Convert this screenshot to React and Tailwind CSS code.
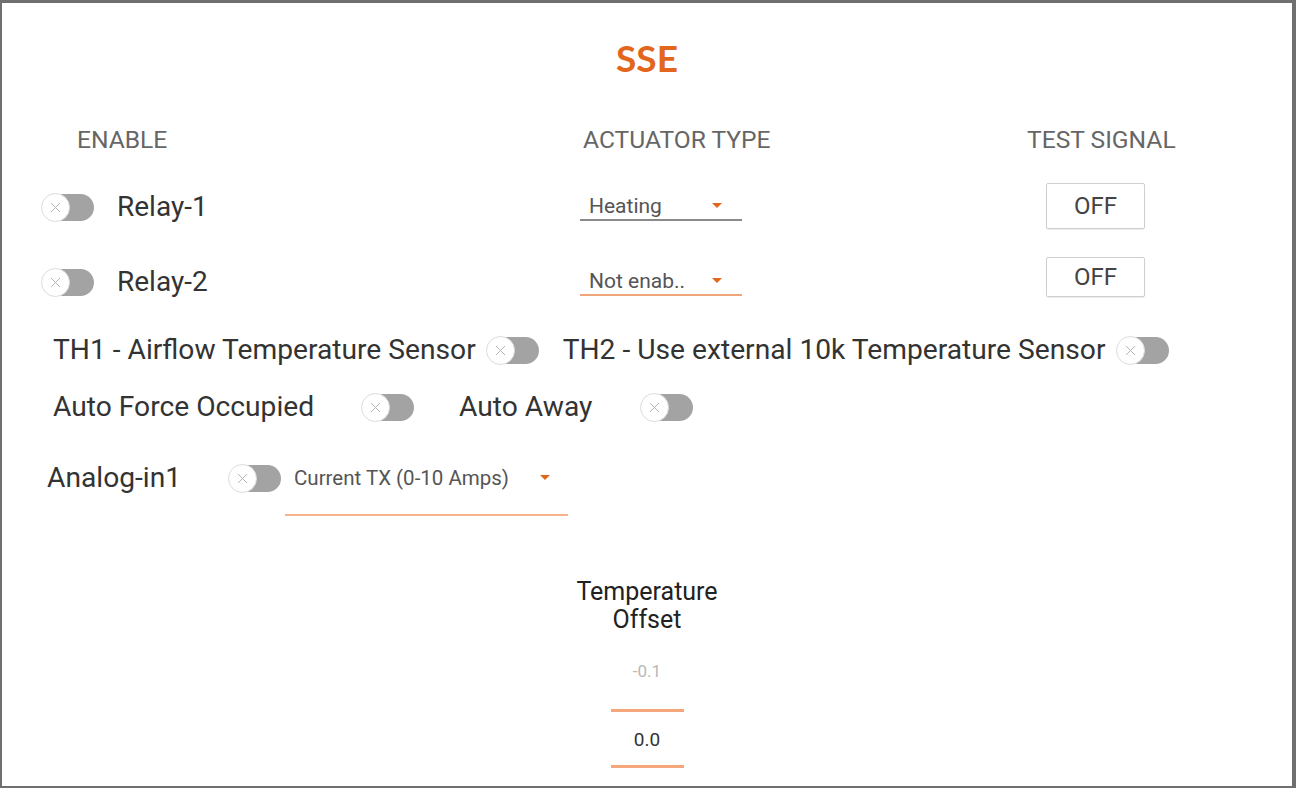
import React from "react";

const Toggle = () => (
  <div className="relative w-[53px] h-[29px] shrink-0">
    <div className="absolute left-[6px] right-0 top-[1px] h-[27px] rounded-full bg-[#a3a3a3]" />
    <div className="absolute left-0 top-0 w-[29px] h-[29px] rounded-full bg-white border border-[#dcdcdc] flex items-center justify-center">
      <svg width="11" height="11" viewBox="0 0 11 11">
        <path d="M1 1L10 10M10 1L1 10" stroke="#b5b5b5" strokeWidth="1" />
      </svg>
    </div>
  </div>
);

const Caret = () => (
  <svg width="10" height="6" viewBox="0 0 10 6">
    <path d="M0 0H10L5 5Z" fill="#e2661b" />
  </svg>
);

const Select = ({ label, line }) => (
  <div className={`w-[162px] h-[28px] pl-[9px] flex items-center justify-between border-b-2 ${line}`}>
    <span className="text-[21px] leading-[24px] text-[#555]">{label}</span>
    <span className="mr-[20px]">
      <Caret />
    </span>
  </div>
);

const OffButton = ({ h }) => (
  <div className={`w-[99px] ${h} border border-[#cfcfcf] rounded-[2px] flex items-center justify-center text-[24px] text-[#444] shadow-[0_1px_1px_rgba(0,0,0,0.08)]`}>
    OFF
  </div>
);

export default function App() {
  return (
    <div
      className="w-[1296px] h-[788px] bg-white border-t-[3px] border-l-2 border-r-4 border-b-2 border-[#6f6f6f] overflow-hidden"
      style={{ fontFamily: "Roboto, 'Noto Sans', sans-serif" }}
    >
      <h1 className="mt-[33px] text-center text-[37px] leading-[44px] font-bold text-[#e2661b]" style={{ fontFamily: "Lato, Roboto, sans-serif" }}>
        SSE
      </h1>

      {/* column headers */}
      <div className="mt-[45px] flex items-center h-[30px] text-[24.6px] text-[#666]">
        <div className="w-[581px] pl-[75px]">ENABLE</div>
        <div className="w-[444px]">ACTUATOR TYPE</div>
        <div>TEST SIGNAL</div>
      </div>

      {/* relay rows */}
      <div className="mt-[29px] flex items-center h-[46px]">
        <div className="w-[578px] pl-[39px] flex items-center gap-[23px]">
          <Toggle />
          <span className="text-[28px] text-[#333]">Relay-1</span>
        </div>
        <Select label="Heating" line="border-[#8a8a8a]" />
        <div className="ml-[304px] mb-[3px]">
          <OffButton h="h-[46px]" />
        </div>
      </div>
      <div className="mt-[32px] flex items-center h-[40px]">
        <div className="w-[578px] pl-[39px] flex items-center gap-[23px]">
          <Toggle />
          <span className="text-[28px] text-[#333]">Relay-2</span>
        </div>
        <Select label="Not enab.." line="border-[#f0a47a]" />
        <div className="ml-[304px] mb-[10px]">
          <OffButton h="h-[40px]" />
        </div>
      </div>

      {/* sensors */}
      <div className="mt-[28px] pl-[51px] flex items-center h-[40px] text-[28.2px] text-[#333]">
        <span>TH1 - Airflow Temperature Sensor</span>
        <span className="ml-[10px]"><Toggle /></span>
        <span className="ml-[24px]">TH2 - Use external 10k Temperature Sensor</span>
        <span className="ml-[11px]"><Toggle /></span>
      </div>
      <div className="mt-[17px] pl-[51px] flex items-center h-[40px] text-[28.2px] text-[#333]">
        <span className="w-[308px]">Auto Force Occupied</span>
        <Toggle />
        <span className="ml-[45px] w-[181px]">Auto Away</span>
        <Toggle />
      </div>

      {/* analog in */}
      <div className="mt-[35px] pl-[45px] flex items-start text-[28.2px] text-[#333]">
        <span className="w-[181px] h-[32px] leading-[32px]">Analog-in1</span>
        <span className="mt-[2px]"><Toggle /></span>
        <div className="ml-[4px] w-[283px] h-[54px] border-b-2 border-[#f7b48c] flex items-start justify-between pl-[9px]">
          <span className="text-[20.5px] leading-[24px] text-[#555] mt-[4px]">Current TX (0-10 Amps)</span>
          <span className="mr-[18px] mt-[13px]"><Caret /></span>
        </div>
      </div>

      {/* temperature offset */}
      <div className="mt-[62px] flex flex-col items-center">
        <div className="text-center text-[25px] leading-[28px] text-[#222]">
          Temperature
          <br />
          Offset
        </div>
        <div className="mt-[27px] text-[17px] text-[#b8b8b8] leading-[20px]">-0.1</div>
        <div className="mt-[28px] w-[73px] h-[3px] bg-[#f4a77c]" />
        <div className="mt-[18px] text-[19px] text-[#333] leading-[20px]">0.0</div>
        <div className="mt-[15px] w-[73px] h-[3px] bg-[#f4a77c]" />
      </div>
    </div>
  );
}
